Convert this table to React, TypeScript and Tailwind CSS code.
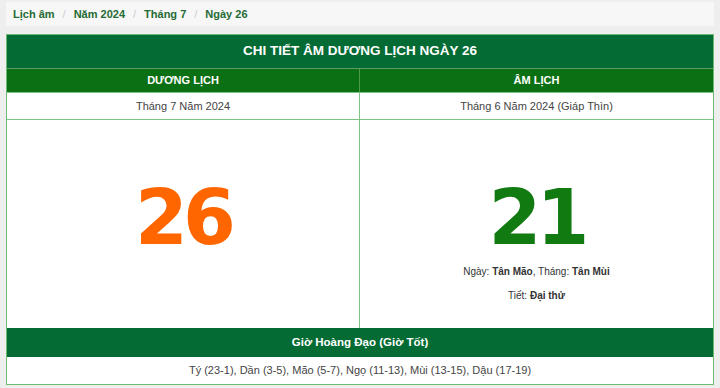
import React from "react";

const big = { fontFamily: "'DejaVu Sans', Tahoma, sans-serif" };

export default function App() {
  return (
    <div className="w-[720px] h-[388px] bg-[#eeeeee] px-[6px] pt-[2px] overflow-hidden" style={{ fontFamily: "'Liberation Sans', Arial, sans-serif" }}>
      <div className="h-[24px] bg-[#f7f7f7] flex items-center pl-[7px] text-[11px] font-bold text-[#246b34]">
        <span>Lịch âm</span>
        <span className="px-[8px] font-normal text-[#cccccc]">/</span>
        <span>Năm 2024</span>
        <span className="px-[8px] font-normal text-[#cccccc]">/</span>
        <span>Tháng 7</span>
        <span className="px-[8px] font-normal text-[#cccccc]">/</span>
        <span>Ngày 26</span>
      </div>
      <div className="mt-[8px] border border-[#6dbb72] bg-white">
        <div className="h-[33px] bg-[#036b33] text-white font-bold text-[13.5px] flex items-center justify-center">
          CHI TIẾT ÂM DƯƠNG LỊCH NGÀY 26
        </div>
        <div className="h-px bg-[#5e9c6a]" />
        <div className="grid grid-cols-2">
          <div className="h-[23px] bg-[#0b7014] text-white font-bold text-[11px] flex items-center justify-center border-r border-[#4c9a4c]">DƯƠNG LỊCH</div>
          <div className="h-[23px] bg-[#0b7014] text-white font-bold text-[11px] flex items-center justify-center">ÂM LỊCH</div>
          <div className="h-[27px] border-t border-r border-[#7cc47f] flex items-center justify-center text-[11px] text-[#444]">Tháng 7 Năm 2024</div>
          <div className="h-[27px] border-t border-[#7cc47f] flex items-center justify-center text-[11px] text-[#444]">Tháng 6 Năm 2024 (Giáp Thìn)</div>
          <div className="h-[209px] border-t border-r border-[#7cc47f] flex items-center justify-center">
            <span className="text-[76px] font-bold text-[#ff6600] leading-none tracking-[-5px] mb-[12px]" style={big}>26</span>
          </div>
          <div className="h-[209px] border-t border-[#7cc47f] flex flex-col items-center">
            <span className="text-[76px] font-bold text-[#117a11] leading-none tracking-[-5px] mt-[60px]" style={big}>21</span>
            <div className="mt-[9px] text-[10px] leading-[14px] text-[#333]">
              Ngày: <b>Tân Mão</b>, Tháng: <b>Tân Mùi</b>
            </div>
            <div className="mt-[10px] text-[10px] leading-[14px] text-[#333]">
              Tiết: <b>Đại thử</b>
            </div>
          </div>
        </div>
        <div className="h-[29px] bg-[#036b33] text-white font-bold text-[11.5px] flex items-center justify-center">
          Giờ Hoàng Đạo (Giờ Tốt)
        </div>
        <div className="h-[27px] flex items-center justify-center text-[11px] text-[#444]">
          Tý (23-1), Dần (3-5), Mão (5-7), Ngọ (11-13), Mùi (13-15), Dậu (17-19)
        </div>
      </div>
    </div>
  );
}
